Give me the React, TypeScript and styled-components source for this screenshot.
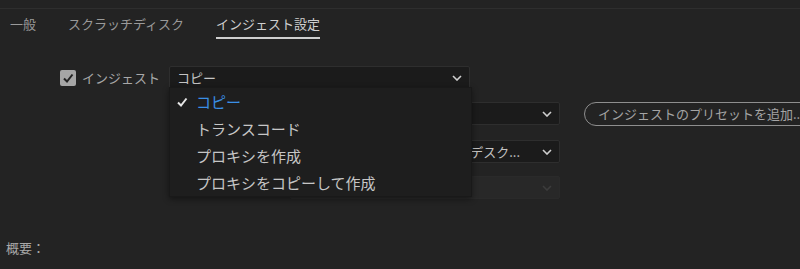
import React from 'react';
import styled, { createGlobalStyle } from 'styled-components';

const GlobalStyle = createGlobalStyle`
  html, body {
    margin: 0;
    padding: 0;
    background: #232323;
    overflow: hidden;
  }
  body {
    width: 800px;
    height: 269px;
    font-family: "Noto Sans CJK JP", "Noto Sans", sans-serif;
  }
`;

const Page = styled.div`
  width: 800px;
  height: 269px;
  background: #232323;
  display: flex;
  flex-direction: column;
  overflow: hidden;
`;

const TopStrip = styled.div`
  height: 8px;
  border-bottom: 1px solid #2e2e2e;
  flex-shrink: 0;
`;

const Tabs = styled.div`
  display: flex;
  gap: 32px;
  padding: 6px 0 0 10px;
`;

const Tab = styled.div<{ $active?: boolean }>`
  font-size: 13px;
  line-height: 18px;
  padding-bottom: 4px;
  color: ${(p) => (p.$active ? '#cfcfcf' : '#9a9a9a')};
  border-bottom: 2px solid ${(p) => (p.$active ? '#cfcfcf' : 'transparent')};
`;

const Form = styled.div`
  display: flex;
  flex-direction: column;
  padding: 27px 0 0 60px;
`;

const Row = styled.div<{ $gap: number }>`
  display: flex;
  align-items: center;
  height: 23px;
  margin-top: ${(p) => p.$gap}px;
`;

const CheckLabel = styled.label`
  display: flex;
  align-items: center;
  gap: 6px;
  width: 109px;
  flex-shrink: 0;
  font-size: 13px;
  color: #a8a8a8;
`;

const CheckBox = styled.span`
  width: 16px;
  height: 16px;
  border-radius: 2px;
  background: #a6a6a6;
  display: flex;
  align-items: center;
  justify-content: center;
`;

/* label column of the lower rows; the open menu covers it */
const LabelSpace = styled.div`
  width: 230px;
  flex-shrink: 0;
`;

const SelectWrap = styled.div`
  position: relative;
  flex-shrink: 0;
`;

const Select = styled.div<{ $width: number; $disabled?: boolean; $end?: boolean }>`
  width: ${(p) => p.$width}px;
  flex-shrink: 0;
  height: 23px;
  box-sizing: border-box;
  display: flex;
  align-items: center;
  justify-content: ${(p) => (p.$end ? 'flex-end' : 'space-between')};
  gap: 22px;
  padding: 0 7px;
  background: ${(p) => (p.$disabled ? '#282828' : '#1b1b1b')};
  border: 1px solid ${(p) => (p.$disabled ? '#2a2a2a' : '#2e2e2e')};
  border-radius: 2px;
  font-size: 13px;
  color: #c4c4c4;
`;

const SelectText = styled.span`
  white-space: nowrap;
  overflow: hidden;
`;

const Menu = styled.div`
  position: absolute;
  left: 0;
  top: 21px;
  width: 303px;
  background: #1e1e1e;
  border: 1px solid #191919;
  box-shadow: 0 2px 6px rgba(0, 0, 0, 0.45);
  z-index: 10;
  box-sizing: border-box;
`;

const MenuItem = styled.div<{ $selected?: boolean }>`
  position: relative;
  height: 27px;
  display: flex;
  align-items: center;
  padding-left: 26px;
  font-size: 15px;
  color: ${(p) => (p.$selected ? '#3a8fe6' : '#c6c6c6')};
`;

const MenuCheck = styled.span`
  position: absolute;
  left: 6px;
  top: 8px;
  display: flex;
`;

const PresetButton = styled.button`
  flex-shrink: 0;
  margin-left: 24px;
  height: 24px;
  padding: 0 13px;
  border: 1.5px solid #8e8e8e;
  border-radius: 12px;
  background: transparent;
  color: #a4a4a4;
  font-family: inherit;
  font-size: 13px;
  white-space: nowrap;
`;

const Summary = styled.div`
  margin-top: 40px;
  padding-left: 6px;
  font-size: 13px;
  line-height: 18px;
  color: #a8a8a8;
`;

const Chevron = ({ color = '#cfcfcf' }: { color?: string }) => (
  <svg width="10" height="6" viewBox="0 0 10 6">
    <polyline points="1,1 5,5 9,1" fill="none" stroke={color} strokeWidth="1.6" />
  </svg>
);

const Tick = ({ color, size }: { color: string; size: number }) => (
  <svg width={size} height={size} viewBox="0 0 12 12">
    <polyline points="2,6.5 5,9.5 10.5,2.5" fill="none" stroke={color} strokeWidth="2" />
  </svg>
);

const options = ['コピー', 'トランスコード', 'プロキシを作成', 'プロキシをコピーして作成'];

export default function App() {
  return (
    <>
      <GlobalStyle />
      <Page>
        <TopStrip />
        <Tabs>
          <Tab>一般</Tab>
          <Tab>スクラッチディスク</Tab>
          <Tab $active>インジェスト設定</Tab>
        </Tabs>
        <Form>
          <Row $gap={0}>
            <CheckLabel>
              <CheckBox>
                <Tick color="#232323" size={12} />
              </CheckBox>
              インジェスト
            </CheckLabel>
            <SelectWrap>
              <Select $width={301}>
                <SelectText>コピー</SelectText>
                <Chevron />
              </Select>
              <Menu>
                {options.map((o, i) => (
                  <MenuItem key={o} $selected={i === 0}>
                    {i === 0 && (
                      <MenuCheck>
                        <Tick color="#e6e6e6" size={12} />
                      </MenuCheck>
                    )}
                    {o}
                  </MenuItem>
                ))}
              </Menu>
            </SelectWrap>
          </Row>
          <Row $gap={13}>
            <LabelSpace />
            <Select $width={270}>
              <SelectText />
              <Chevron />
            </Select>
            <PresetButton>インジェストのプリセットを追加...</PresetButton>
          </Row>
          <Row $gap={15}>
            <LabelSpace />
            <Select $width={270} $end>
              <SelectText>デスク...</SelectText>
              <Chevron />
            </Select>
          </Row>
          <Row $gap={13}>
            <LabelSpace />
            <Select $width={270} $disabled>
              <SelectText />
              <Chevron color="#3c3c3c" />
            </Select>
          </Row>
        </Form>
        <Summary>概要：</Summary>
      </Page>
    </>
  );
}
